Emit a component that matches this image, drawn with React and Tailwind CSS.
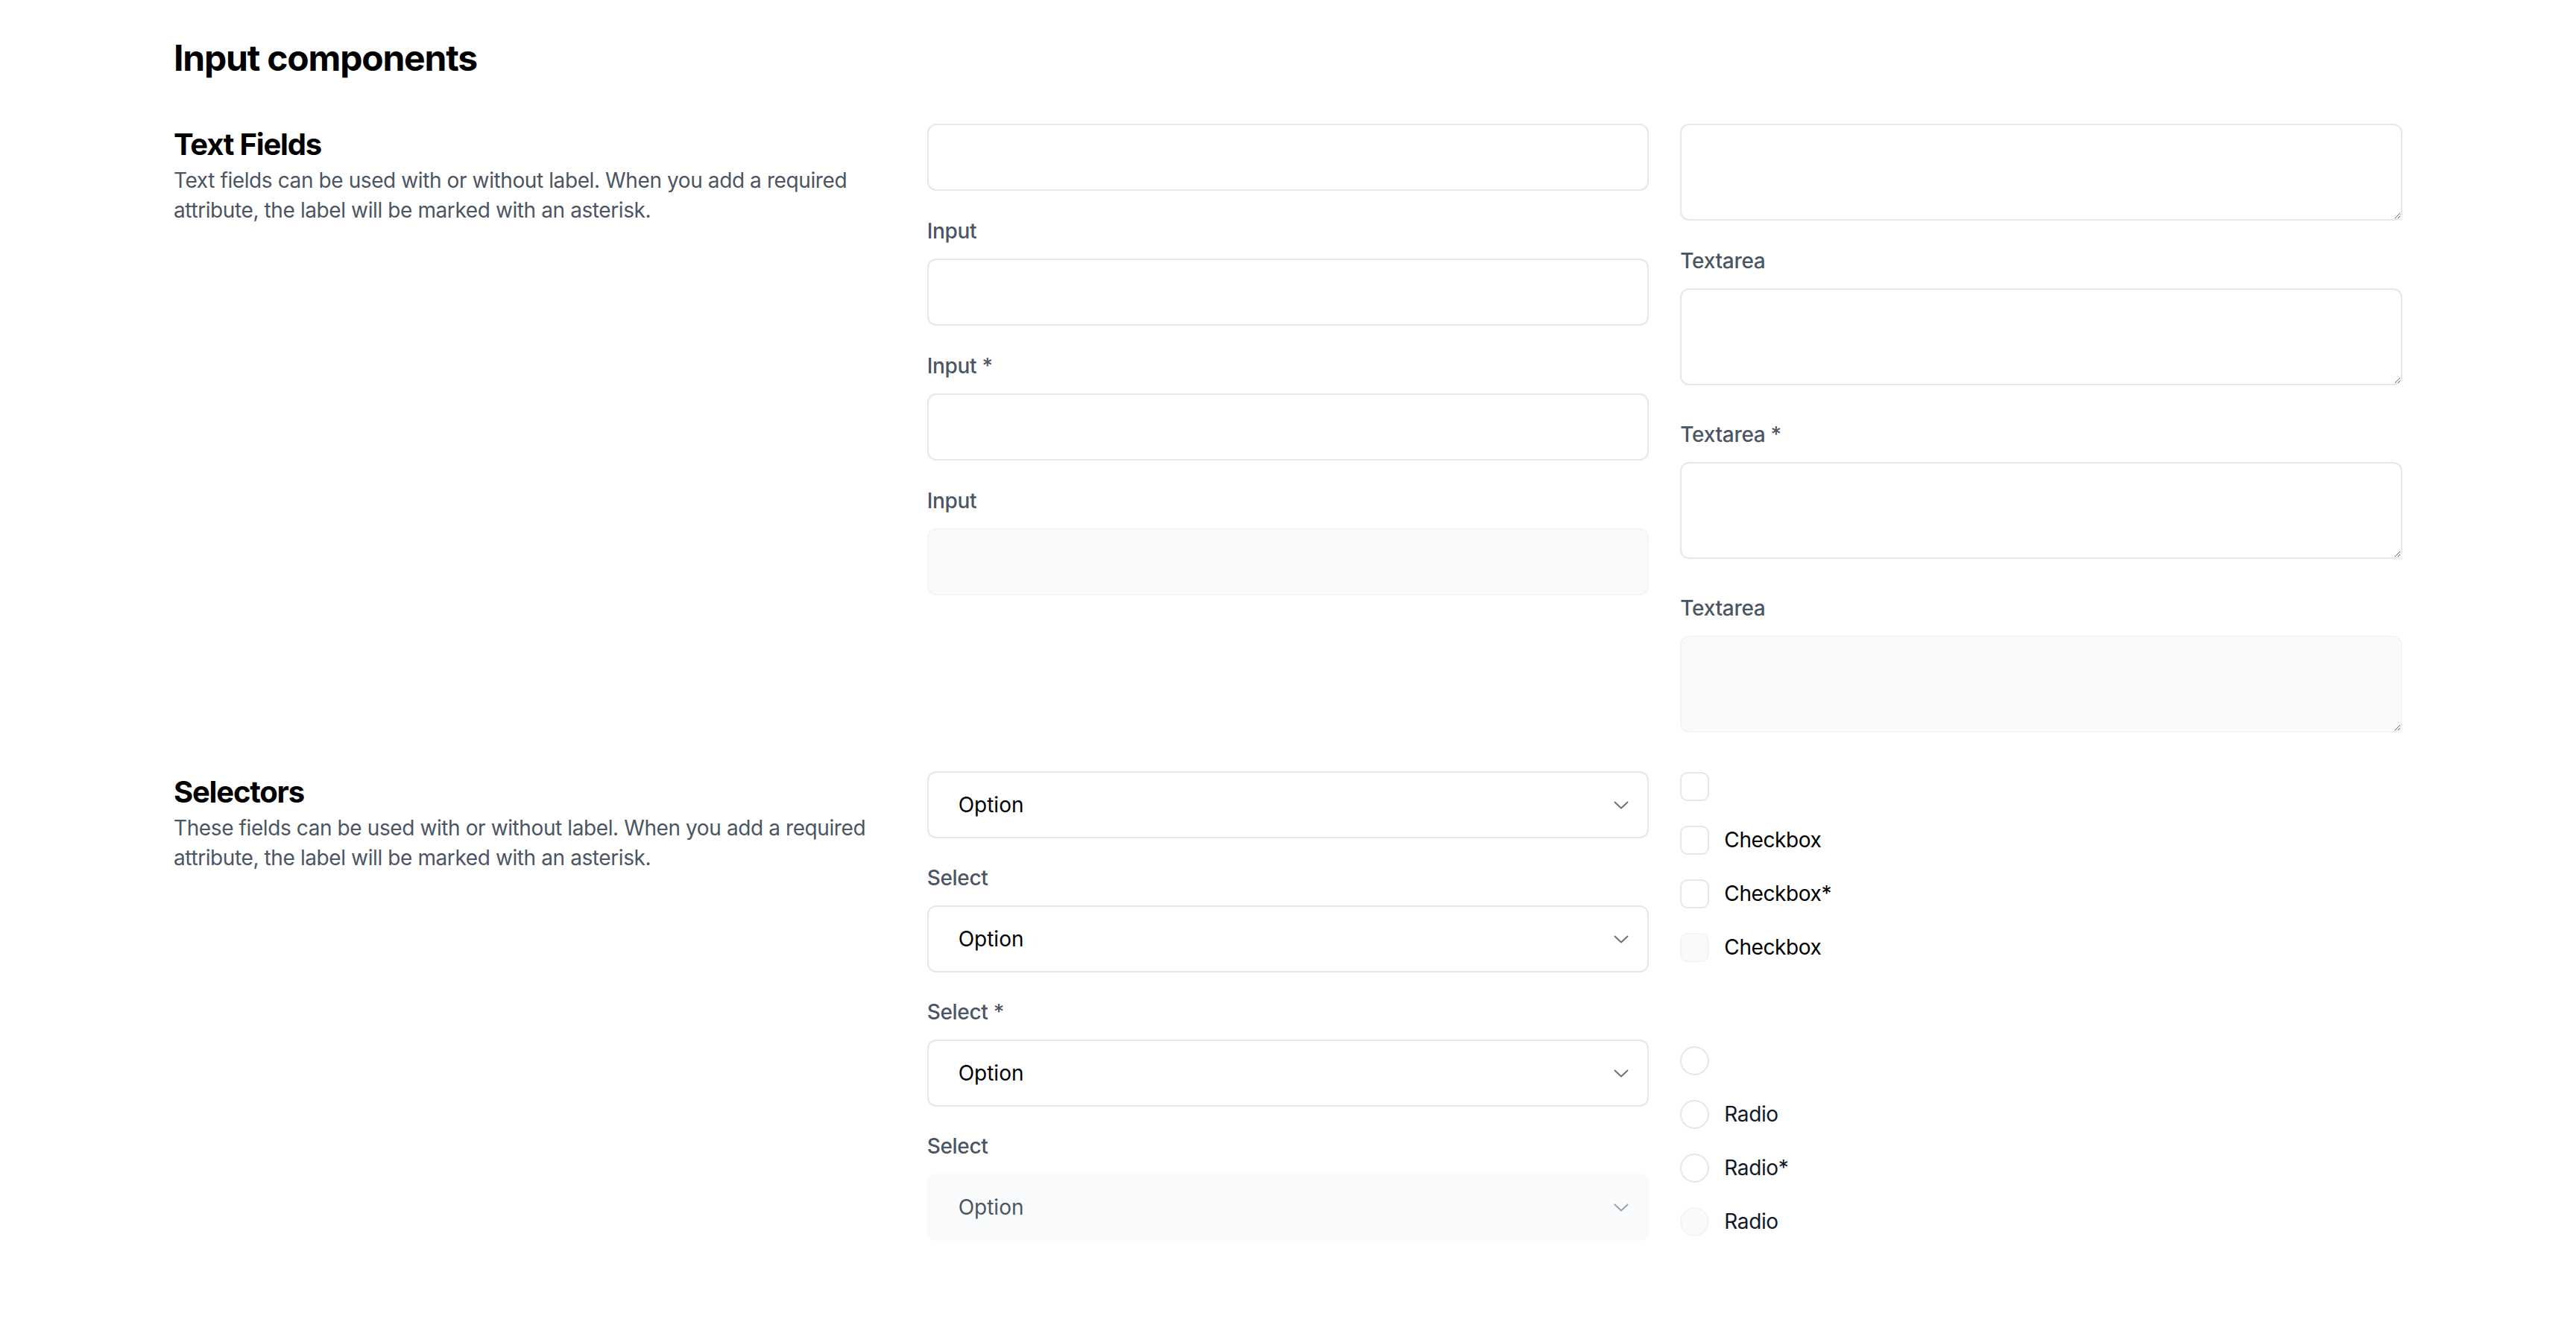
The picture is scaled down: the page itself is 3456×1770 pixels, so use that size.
import clsx from "clsx";

const Label = ({ children }) => (
    <label className="block mb-[17px] text-[28px] leading-[40px] font-medium tracking-[-0.3px] text-[#4b5563]">
        {children}
    </label>
);

const TextInput = ({ disabled }) => (
    <input
        disabled={disabled}
        className={clsx(
            "block w-full h-[90px] rounded-[12px] border-2 px-[24px] text-[28px] outline-none",
            disabled ? "bg-[#f9fafb] border-[#f3f4f6]" : "bg-white border-[#e5e7eb]"
        )}
    />
);

// labelled textareas sit inline in the reference, which leaves a small gap below them
const TextArea = ({ disabled, labelled }) => (
    <textarea
        readOnly
        className={clsx(
            "block w-full h-[130px] rounded-[12px] border-2 px-[24px] py-[16px] text-[28px] outline-none",
            labelled && "mb-[12px]",
            disabled ? "bg-[#f9fafb] border-[#f3f4f6]" : "bg-white border-[#e5e7eb]"
        )}
    />
);

const Chevron = ({ disabled }) => (
    <svg width="20" height="11" viewBox="0 0 20 11" fill="none">
        <polyline
            points="1.5,1.5 10,9.5 18.5,1.5"
            stroke={disabled ? "#9ca3af" : "#6b7280"}
            strokeWidth="2"
            strokeLinecap="round"
            strokeLinejoin="round"
        />
    </svg>
);

const Select = ({ disabled }) => (
    <div
        className={clsx(
            "flex items-center justify-between w-full h-[90px] rounded-[12px] border-2 pl-[40px] pr-[25px]",
            disabled ? "bg-[#f9fafb] border-[#f9fafb]" : "bg-white border-[#e5e7eb]"
        )}
    >
        <span className={clsx("text-[28px] leading-[40px]", disabled ? "text-[#4b5563]" : "text-black")}>
            Option
        </span>
        <Chevron disabled={disabled} />
    </div>
);

const Field = ({ label, children }) => (
    <div>
        {label && <Label>{label}</Label>}
        {children}
    </div>
);

const Check = ({ label, disabled, round }) => (
    <label className="flex items-center gap-[20px] h-[40px]">
        <span
            className={clsx(
                "block w-[39px] h-[39px] border-2 shrink-0",
                round ? "rounded-full" : "rounded-[10px]",
                disabled ? "bg-[#f9fafb] border-[#f3f4f6]" : "bg-white border-[#e5e7eb]"
            )}
        />
        {label && (
            <span
                className={clsx(
                    "text-[28px] leading-[40px] tracking-[-0.4px]",
                    round ? "text-[#111827]" : "text-black"
                )}
            >
                {label}
            </span>
        )}
    </label>
);

const SectionIntro = ({ title, text }) => (
    <div>
        <h2 className="text-[40px] leading-[56px] font-bold tracking-[-1.2px] text-black">{title}</h2>
        <p className="text-[28px] leading-[40px] tracking-[-0.4px] text-[#4b5563]">{text}</p>
    </div>
);

export default function App() {
    return (
        <div className="min-h-screen bg-white [font-family:Inter,sans-serif] px-[233px] pt-[46px] pb-[100px]">
            <h1 className="text-[48px] leading-[64px] font-bold tracking-[-1.2px] text-black">Input components</h1>

            <div className="mt-[56px] flex flex-col gap-[52px]">
                {/* Text fields */}
                <section className="grid grid-cols-3 gap-x-[42px] items-start">
                    <SectionIntro
                        title="Text Fields"
                        text="Text fields can be used with or without label. When you add a required attribute, the label will be marked with an asterisk."
                    />
                    <div className="flex flex-col gap-[34px]">
                        <Field><TextInput /></Field>
                        <Field label="Input"><TextInput /></Field>
                        <Field label="Input *"><TextInput /></Field>
                        <Field label="Input"><TextInput disabled /></Field>
                    </div>
                    <div className="flex flex-col gap-[34px]">
                        <Field><TextArea /></Field>
                        <Field label="Textarea"><TextArea labelled /></Field>
                        <Field label="Textarea *"><TextArea labelled /></Field>
                        <Field label="Textarea"><TextArea disabled /></Field>
                    </div>
                </section>

                {/* Selectors */}
                <section className="grid grid-cols-3 gap-x-[42px] items-start">
                    <SectionIntro
                        title="Selectors"
                        text="These fields can be used with or without label. When you add a required attribute, the label will be marked with an asterisk."
                    />
                    <div className="flex flex-col gap-[33px]">
                        <Field><Select /></Field>
                        <Field label="Select"><Select /></Field>
                        <Field label="Select *"><Select /></Field>
                        <Field label="Select"><Select disabled /></Field>
                    </div>
                    <div className="flex flex-col gap-[112px]">
                        <div className="flex flex-col gap-[32px]">
                            <Check />
                            <Check label="Checkbox" />
                            <Check label="Checkbox*" />
                            <Check label="Checkbox" disabled />
                        </div>
                        <div className="flex flex-col gap-[32px]">
                            <Check round />
                            <Check round label="Radio" />
                            <Check round label="Radio*" />
                            <Check round label="Radio" disabled />
                        </div>
                    </div>
                </section>
            </div>
        </div>
    );
}
